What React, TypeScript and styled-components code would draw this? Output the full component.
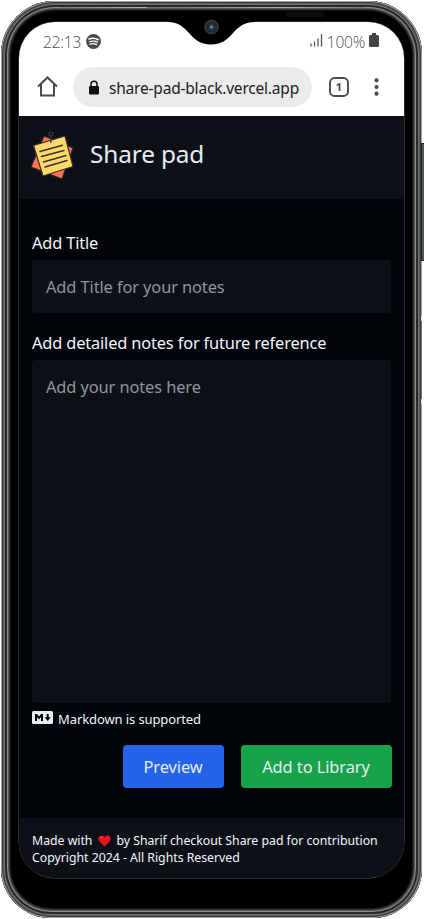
import React from "react";
import styled, { createGlobalStyle } from "styled-components";

const Global = createGlobalStyle`
  * { box-sizing: border-box; }
  body { margin: 0; background: #fff; font-family: "Noto Sans", sans-serif; overflow: hidden; }
`;

const Stage = styled.div`
  position: relative;
  width: 424px;
  height: 919px;
  padding: 1px 2px 1px 1px;
  overflow: hidden;
`;

const Phone = styled.div`
  height: 917px;
  padding: 21px 18px 40px 18px;
  border-radius: 54px 54px 50px 50px;
  background: #000;
  box-shadow:
    inset 0 0 0 1px #a0a3a2,
    inset 0 0 0 2px #3c3f3e,
    inset 0 0 0 3px #565958,
    inset 0 0 0 4px #747676,
    inset 0 0 0 5px #232525,
    inset 0 0 0 6px #2c2e2e,
    inset 0 0 0 7px #8c8e8e,
    inset 0 0 0 8px #555757,
    inset 0 0 0 9px #2f3131,
    inset 0 0 0 10px #151616;
`;

const SideKey = styled.div`
  position: absolute;
  right: 0;
  top: 143px;
  width: 3px;
  height: 118px;
  background: #555858;
  border: 1px solid #202222;
  border-right: 0;
`;

const RimMark = styled.div`
  position: absolute;
  right: 2px;
  top: 316px;
  width: 1px;
  height: 88px;
  border: solid #e4e4e4;
  border-width: 5px 0;
  background: #777;
`;

const Screen = styled.main`
  display: flex;
  flex-direction: column;
  width: 385px;
  height: 856px;
  border-radius: 36px;
  overflow: hidden;
  background: #010409;
  box-shadow: 0 0 0 0.5px #555;
`;

const Chrome = styled.div`
  height: 94px;
  flex: none;
  background: #fff;
  color: #4b4b4b;
`;

const StatusBar = styled.div`
  display: flex;
  align-items: center;
  height: 38px;
  padding: 1px 25px 0 24px;
`;

const Light = styled.span`
  font-family: "Open Sans", sans-serif;
  font-weight: 300;
  font-size: 15.5px;
  line-height: 20px;
  letter-spacing: -0.2px;
`;

const Spacer = styled.div`
  flex: 1;
`;

const AddressBar = styled.div`
  display: flex;
  align-items: center;
  height: 54px;
  padding-left: 18px;
`;

const Address = styled.div`
  display: flex;
  align-items: center;
  width: 239px;
  height: 40px;
  margin-left: 15px;
  padding: 1px 0 0 15px;
  border-radius: 20px;
  background: #ebebeb;
  color: #202124;
  font-size: 15.5px;
  letter-spacing: -0.2px;
  white-space: nowrap;
`;

const Header = styled.header`
  display: flex;
  align-items: center;
  height: 83px;
  flex: none;
  padding: 0 0 2px 11px;
  background: #0d1117;
`;

const Brand = styled.h1`
  margin: -5px 0 0 14px;
  color: #e6edf3;
  font-size: 24.4px;
  font-weight: 400;
  line-height: 34px;
  letter-spacing: -0.15px;
`;

const Form = styled.section`
  flex: 1;
  padding: 31px 13px 0 13px;
`;

const Label = styled.label`
  display: block;
  height: 30px;
  color: #f0f6fc;
  font-size: 16.4px;
  line-height: 25px;
  letter-spacing: -0.16px;
  white-space: nowrap;
`;

const Field = styled.div<{ $height: number; $gap: number }>`
  height: ${(p) => p.$height}px;
  margin-bottom: ${(p) => p.$gap}px;
  padding: 14px 14px 0;
  border-radius: 4px;
  background: #0d1117;
  color: #8f969f;
  font-size: 16.4px;
  line-height: 25px;
  letter-spacing: -0.1px;
`;

const Hint = styled.div`
  display: flex;
  align-items: center;
  gap: 5px;
  height: 20px;
  color: #f0f6fc;
  font-size: 13px;
  letter-spacing: -0.1px;
`;

const Actions = styled.div`
  display: flex;
  justify-content: flex-end;
  gap: 17px;
  margin-top: 16px;
  margin-right: -0.5px;
`;

const Action = styled.button<{ $width: number; $color: string }>`
  width: ${(p) => p.$width}px;
  height: 43px;
  padding: 0;
  border: 0;
  border-radius: 4px;
  background: ${(p) => p.$color};
  color: #e6edf3;
  font: 400 16.4px/25px "Noto Sans", sans-serif;
  letter-spacing: -0.08px;
  white-space: nowrap;
`;

const Footer = styled.footer`
  height: 60px;
  flex: none;
  padding: 14px 0 0 13px;
  background: #0d1117;
  color: #f0f6fc;
  font-size: 12.3px;
  line-height: 17px;
  letter-spacing: -0.02px;
  white-space: nowrap;
`;

const FooterLine = styled.div`
  display: flex;
  align-items: center;
  height: 17px;
`;

const Overlay = styled.svg`
  position: absolute;
  left: 0;
  top: 0;
`;

const Icon = styled.svg<{ $ml?: number; $mt?: number }>`
  display: block;
  flex: none;
  margin-left: ${(p) => p.$ml ?? 0}px;
  margin-top: ${(p) => p.$mt ?? 0}px;
`;

const Inset = styled.span<{ $left: number }>`
  margin-left: ${(p) => p.$left}px;
`;

const Notch = () => (
  <Overlay width="424" height="50" viewBox="0 0 424 50">
    <defs>
      <linearGradient id="rim" x1="0" x2="1">
        <stop offset="0" stopColor="#777b7a" />
        <stop offset="0.28" stopColor="#b0b2b2" />
        <stop offset="0.29" stopColor="#6c6f6f" />
        <stop offset="0.72" stopColor="#aaa" />
        <stop offset="1" stopColor="#777" />
      </linearGradient>
      <radialGradient id="lens">
        <stop offset="0" stopColor="#93b5cd" />
        <stop offset="0.25" stopColor="#263f57" />
        <stop offset="0.6" stopColor="#20252d" />
        <stop offset="0.85" stopColor="#36393d" />
        <stop offset="1" stopColor="#111" />
      </radialGradient>
    </defs>
    <rect x="60" y="7" width="305" height="1" fill="url(#rim)" />
    <rect x="286" y="12" width="39" height="5" rx="2" fill="#0c0c0c" />
    <path d="M168 21V22C179 22 183 27 189 33C195 40 201 44.500 211 44.500C221 44.500 227 40 233 33C239 27 243 22 255 22V21Z" fill="#000" />
    <circle cx="211.500" cy="27" r="7.700" fill="url(#lens)" />
  </Overlay>
);

const Spotify = () => (
  <Icon $ml={5} $mt={-1} width="15" height="15" viewBox="0 0 15 15">
    <circle cx="7.500" cy="7.500" r="7.400" fill="#4a4a4a" />
    <path d="M3 5Q8 3.300 12.200 5.700" fill="none" stroke="#fff" strokeWidth="1.600" strokeLinecap="round" />
    <path d="M3.500 7.700Q8 6.100 11.500 8.300M4 10.200Q7.500 8.900 10.600 10.600" fill="none" stroke="#fff" strokeWidth="1.200" strokeLinecap="round" />
  </Icon>
);

const NoteLogo = () => (
  <Icon width="46" height="52" viewBox="0 0 46 52">
    <path d="M14 5L43 17L32 48L1 36Z" fill="#ff7058" stroke="#2a2726" strokeWidth="1.200" strokeLinejoin="round" />
    <path d="M3.500 14.500L35 5L43 35.500L13 45Z" fill="#ffd968" stroke="#333029" strokeWidth="1.200" strokeLinejoin="round" />
    <path d="M10 20.500L32.500 14.200M11.500 25.500L34 19.500M13.500 31L36 24.500M15 36L37 29.500" stroke="#35342e" strokeWidth="1.500" strokeLinecap="round" />
    <circle cx="20.800" cy="3" r="2" fill="none" stroke="#3a3e43" strokeWidth="1.200" />
    <path d="M20.800 5V12" stroke="#34383d" strokeWidth="1.300" />
  </Icon>
);

export default function App() {
  return (
    <>
      <Global />
      <Stage>
        <SideKey />
        <Phone>
          <Screen>
            <Chrome>
              <StatusBar>
                <Light>22:13</Light>
                <Spotify />
                <Spacer />
                <Icon $mt={-2} width="13" height="13" viewBox="0 0 13 13">
                  <path d="M1 9.500V12.500M4.500 7.500V12.500M8 4.500V12.500M11.500 0V12.500" stroke="#555" strokeWidth="1.300" />
                </Icon>
                <Inset $left={4}><Light>100%</Light></Inset>
                <Icon $ml={4} $mt={-3} width="10" height="14" viewBox="0 0 10 14">
                  <path d="M3 0H7V2H8.500Q10 2 10 3.500V12.500Q10 14 8.500 14H1.500Q0 14 0 12.500V3.500Q0 2 1.500 2H3Z" fill="#444" />
                </Icon>
              </StatusBar>
              <AddressBar>
                <Icon $mt={-1} width="21" height="21" viewBox="0 0 21 21">
                  <path d="M1 10.500L10.500 1.500L20 10.500M4 8V19.500H17V8" fill="none" stroke="#4a4a4a" strokeWidth="2" />
                </Icon>
                <Address>
                  <Icon width="12" height="15" viewBox="0 0 12 15">
                    <rect x="1" y="6" width="10" height="8.500" rx="1" fill="#111" />
                    <path d="M3 7V4.200a3 3 0 0 1 6 0V7" fill="none" stroke="#111" strokeWidth="1.500" />
                  </Icon>
                  <Inset $left={9}>share-pad-black.vercel.app</Inset>
                </Address>
                <Icon $ml={17} $mt={-1} width="20" height="20" viewBox="0 0 20 20">
                  <rect x="1" y="1" width="18" height="18" rx="4.500" fill="none" stroke="#4a4a4a" strokeWidth="1.900" />
                  <text x="10" y="13.800" textAnchor="middle" fontSize="11" fontWeight="700" fontFamily="Open Sans" fill="#4a4a4a">1</text>
                </Icon>
                <Icon $ml={25} $mt={-1} width="5" height="18" viewBox="0 0 5 18">
                  <g fill="#4a4a4a"><circle cx="2.500" cy="2.300" r="2.100" /><circle cx="2.500" cy="9" r="2.100" /><circle cx="2.500" cy="15.700" r="2.100" /></g>
                </Icon>
              </AddressBar>
            </Chrome>
            <Header>
              <NoteLogo />
              <Brand>Share pad</Brand>
            </Header>
            <Form>
              <Label>Add Title</Label>
              <Field $height={53} $gap={17}>Add Title for your notes</Field>
              <Label>Add detailed notes for future reference</Label>
              <Field $height={343} $gap={6}>Add your notes here</Field>
              <Hint>
                <Icon $mt={-3} width="21" height="13" viewBox="0 0 21 13">
                  <rect width="21" height="13" rx="1.500" fill="#e6edf3" />
                  <path d="M3 10V3H5L7 5.600L9 3H11V10H9V6L7 8.500L5 6V10ZM14.700 3H16.700V6.300H18.800L15.700 10L12.600 6.300H14.700Z" fill="#010409" />
                </Icon>
                Markdown is supported
              </Hint>
              <Actions>
                <Action $width={101} $color="#2563eb">Preview</Action>
                <Action $width={151} $color="#16a34a">Add to Library</Action>
              </Actions>
            </Form>
            <Footer>
              <FooterLine>
                Made with
                <Icon $ml={6} width="13" height="12" viewBox="0 0 13 12">
                  <path d="M6.500 11.500L1.500 6.500C-1 3.500 1 .5 3.500.5Q5.500.5 6.500 2.500Q7.500.5 9.500.5C12 .5 14 3.500 11.500 6.500Z" fill="#e81224" />
                  <path d="M2.300 3.200Q3 1.800 4.500 2.200" fill="none" stroke="#ff6a70" strokeWidth="1" />
                </Icon>
                <Inset $left={5}>by Sharif checkout Share pad for contribution</Inset>
              </FooterLine>
              <FooterLine>Copyright 2024 - All Rights Reserved</FooterLine>
            </Footer>
          </Screen>
        </Phone>
        <RimMark />
        <Notch />
      </Stage>
    </>
  );
}
